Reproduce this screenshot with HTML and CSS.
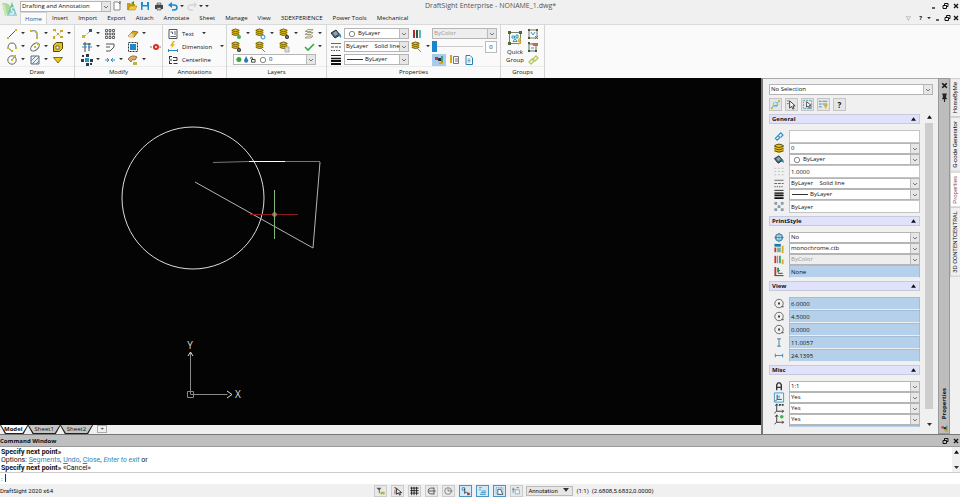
FILE: index.html
```html
<!DOCTYPE html>
<html lang="en">
<head>
    <meta charset="UTF-8">
    <meta name="viewport" content="width=device-width, initial-scale=1.0">
    <title>DraftSight Enterprise - NONAME_1.dwg*</title>
    <link rel="stylesheet" href="styles.css">
</head>
<body>
    <!-- icon sprite -->
    <svg class="sprite" aria-hidden="true">
        <symbol id="i-down" viewBox="0 0 5 4"><path d="M0 0h5L2.500 3z" fill="#333"/></symbol>
        <symbol id="i-up" viewBox="0 0 6 4"><path d="M0 4h6L3 0z" fill="#111"/></symbol>
        <symbol id="i-close" viewBox="0 0 8 8"><path d="M2 2l4 4M6 2l-4 4" stroke="#111" stroke-width="1.300"/></symbol>
        <symbol id="i-min" viewBox="0 0 8 8"><path d="M2 6h3" stroke="#111" stroke-width="1.300"/></symbol>
        <symbol id="i-restore" viewBox="0 0 8 8"><path d="M3.500 3V1.500h3.500v3H5.500M2 3.500h3.500v3H2z" fill="none" stroke="#111"/></symbol>
        <symbol id="i-pin" viewBox="0 0 8 8"><path d="M2 1h4M2 5h4M4 5v3" stroke="#222"/><path d="M2.500 1h3v4h-3z" fill="#222"/></symbol>

        <symbol id="i-new" viewBox="0 0 12 12"><path d="M3 2h4l2 2v6H3z" fill="#fff" stroke="#888"/><path d="M9 1v3" stroke="#444"/></symbol>
        <symbol id="i-open" viewBox="0 0 12 12"><path d="M2 3h3l1 1h4v6H2z" fill="#c99a1b"/><path d="M3 10l2-4h7l-2 4z" fill="#f2cf3a" stroke="#8b741a" stroke-width=".5"/><path d="M6 3l3-2v4z" fill="#27a33d"/></symbol>
        <symbol id="i-save" viewBox="0 0 12 12"><path d="M2 2h8v8H2z" fill="#2589c9"/><path d="M4 2h4v3H4zM3.500 6.500h5V10h-5z" fill="#e7f5fc"/></symbol>
        <symbol id="i-print" viewBox="0 0 12 12"><path d="M2 5h8v4H2z" fill="#444"/><path d="M4 3h4v2H4zM4 7.500h4V10H4z" fill="#ccc" stroke="#444" stroke-width=".6"/></symbol>
        <symbol id="i-undo" viewBox="0 0 12 12"><path d="M3 5h4q3 0 3 2.500T7 10H5" fill="none" stroke="#168bd0" stroke-width="1.500"/><path d="M1 5l4-3v6z" fill="#168bd0"/></symbol>
        <symbol id="i-redo" viewBox="0 0 12 12"><path d="M9 5H5Q2 5 2 7.500T5 10h2" fill="none" stroke="#d4d4d4" stroke-width="1.300"/><path d="M11 5L8 2v6z" fill="#d4d4d4"/></symbol>

        <symbol id="i-line" viewBox="0 0 12 12"><path d="M2 10L10 2" stroke="#555"/><path d="M1 9h2v2H1zM9 1h2v2H9z" fill="#c9b928"/></symbol>
        <symbol id="i-poly" viewBox="0 0 12 12"><path d="M2 3q6-1 6 2v5" fill="none" stroke="#666"/><path d="M1 2h2v2H1zM6 3h2v2H6zM7 9h2v2H7z" fill="#c9b928"/></symbol>
        <symbol id="i-points" viewBox="0 0 12 12"><path d="M2 2l4 4 4-3M6 6l-4 4M6 6l4 4" stroke="#888" stroke-width=".7" stroke-dasharray="1 1" fill="none"/><path d="M1 1h3v2H1zM8 2h3v2H8zM5 5h2v2H5zM1 8h2v3H1zM8 8h3v2H8z" fill="#c9a928"/></symbol>
        <symbol id="i-arc" viewBox="0 0 12 12"><path d="M2 7q0-5 4-5t4 5M2 7l4 3" fill="none" stroke="#666"/><path d="M1 6h2v2H1zM9 6h2v2H9zM5 9h2v2H5z" fill="#c9b928"/></symbol>
        <symbol id="i-ellipse" viewBox="0 0 12 12"><ellipse cx="6" cy="6" rx="5" ry="3" transform="rotate(-40 6 6)" fill="none" stroke="#666"/><path d="M5 5h2v2H5zM8 2h2v2H8z" fill="#c9b928"/></symbol>
        <symbol id="i-box" viewBox="0 0 12 12"><path d="M1.500 4l3-2.500h6v6l-3 3h-6z" fill="#e3bf20" stroke="#554700"/><path d="M4 5h3v3H4z" fill="#fff" stroke="#554700" stroke-width=".7"/></symbol>
        <symbol id="i-circle" viewBox="0 0 12 12"><circle cx="6" cy="6" r="4.200" fill="none" stroke="#666"/><path d="M6 6l3-4" stroke="#777"/><path d="M5 5h2v2H5zM8 1h2v2H8z" fill="#c9b928"/></symbol>
        <symbol id="i-hatch" viewBox="0 0 12 12"><path d="M2 2h8v8H2z" fill="#e6f3fa" stroke="#667"/><path d="M2 7l5-5M3 10l7-7M7 10l3-3" stroke="#3b96c9"/></symbol>
        <symbol id="i-tri" viewBox="0 0 12 12"><path d="M1.500 3.500h9L6 9z" fill="#efca19" stroke="#665300" stroke-width=".8"/></symbol>

        <symbol id="i-move" viewBox="0 0 12 12"><path d="M3 9l6-6" stroke="#777" stroke-dasharray="1 1"/><path d="M8 1h3v3H8z" fill="#1d5f87"/><path d="M1 7h3v3H1z" fill="#c9b928"/></symbol>
        <symbol id="i-array" viewBox="0 0 12 12"><path d="M1.500 1.500h2v2h-2zM5 1.500h2v2H5zM8.500 1.500h2v2h-2zM1.500 5h2v2h-2zM5 5h2v2H5zM8.500 5h2v2h-2zM1.500 8.500h2v2h-2zM5 8.500h2v2H5zM8.500 8.500h2v2h-2z" fill="none" stroke="#444" stroke-width=".8"/></symbol>
        <symbol id="i-erase" viewBox="0 0 12 12"><path d="M1 8l5-5 5 1-4 5H3z" fill="#d8a81c" stroke="#665022" stroke-width=".7"/><path d="M1 8l3-3 3 2-1 3H3z" fill="#e9d58b"/></symbol>
        <symbol id="i-trim" viewBox="0 0 12 12"><path d="M4 1v10M8 2v8M2 3h8" stroke="#354650"/><path d="M1 6h5M7 6h4" stroke="#1f8ecb"/></symbol>
        <symbol id="i-fillet" viewBox="0 0 12 12"><path d="M2 3h8v3L6 10H2M2 6h4" fill="none" stroke="#555"/></symbol>
        <symbol id="i-scale" viewBox="0 0 12 12"><path d="M1.500 1.500h9v9h-9z" fill="none" stroke="#333" stroke-dasharray="2 1"/><path d="M3 3h6v6H3z" fill="#198bcd"/></symbol>
        <symbol id="i-explode" viewBox="0 0 12 12"><path d="M0 6h12" stroke="#777" stroke-dasharray="2 1"/><circle cx="6" cy="6" r="3" fill="#da2d20"/><circle cx="6" cy="6" r="1" fill="#fff"/></symbol>
        <symbol id="i-pattern" viewBox="0 0 12 12"><path d="M5 0h3v3H5zM5 9h3v3H5zM0 5h3v3H0zM9 5h3v3H9zM1 1h2v2H1zM9 9h2v2H9z" fill="#263c49"/><path d="M4 4h4v4H4z" fill="#2d91c5"/></symbol>
        <symbol id="i-stretch" viewBox="0 0 12 12"><path d="M1 6h4M7 6h4M3 4l2 2-2 2M9 4L7 6l2 2" fill="none" stroke="#2c8fc3"/></symbol>
        <symbol id="i-arrange" viewBox="0 0 12 12"><path d="M1 5q4-5 9-2L8 6q-3-2-4 2z" fill="#d5ac70" stroke="#7f5527" stroke-width=".8"/><path d="M6 8h4v3H6z" fill="#bcb24a"/></symbol>

        <symbol id="i-text" viewBox="0 0 12 12"><path d="M2 1.500h8v9H2z" fill="#fff" stroke="#555"/><path d="M3.500 4h2v2M7 4h2M7 6h2M3.500 8.500H9" stroke="#345" stroke-width=".8" fill="none"/></symbol>
        <symbol id="i-dim" viewBox="0 0 12 12"><path d="M1.500 8v3M10.500 8v3M2 9.500h8" stroke="#258cc8"/><path d="M6 0L3 5h2L4 8l4-5H6l2-3z" fill="#e4b91c"/></symbol>
        <symbol id="i-center" viewBox="0 0 12 12"><path d="M2 2.500h3M2.500 2v3M6 3.500h4v3H6M2.500 10V7M2 9.500h3M6.500 9.500h4M2 6h3" fill="none" stroke="#333"/></symbol>

        <symbol id="i-layer" viewBox="0 0 12 12"><path d="M1 3q5-4 10 0v6q-5 3-10 0z" fill="#e9c41d"/><path d="M1 3.500q5 3 10 0M1 6q5 3 10 0M1 8.500q5 3 10 0M1 3q5-3.500 10 0" fill="none" stroke="#4b3f05"/></symbol>
        <symbol id="i-layer-green" viewBox="0 0 12 12"><use href="#i-layer" width="9" height="9"/><circle cx="8" cy="9" r="2" fill="#35b64a"/></symbol>
        <symbol id="i-layer-blue" viewBox="0 0 12 12"><use href="#i-layer" width="9" height="9"/><circle cx="8" cy="9" r="2" fill="#fff" stroke="#1f8ecb"/></symbol>
        <symbol id="i-layer-lock" viewBox="0 0 12 12"><use href="#i-layer" width="9" height="9"/><circle cx="8" cy="9" r="2" fill="#222"/><circle cx="8" cy="9" r=".7" fill="#fff"/></symbol>
        <symbol id="i-layer-find" viewBox="0 0 12 12"><use href="#i-layer" width="9" height="9"/><path d="M6 7l4 4" stroke="#888"/></symbol>
        <symbol id="i-layer-del" viewBox="0 0 12 12"><use href="#i-layer" width="9" height="9"/><path d="M6 6h4v5H6z" fill="#ddd" stroke="#999" stroke-width=".7"/></symbol>
        <symbol id="i-layers" viewBox="0 0 12 12"><path d="M2 3.500l3-2h5l-2 2zM2 6.500l3-2h5l-2 2zM2 10l3-2h5l-2 2z" fill="#f3efcf" stroke="#8c8c70" stroke-width=".8"/></symbol>
        <symbol id="i-check" viewBox="0 0 12 12"><path d="M2 6l3 3 6-6" fill="none" stroke="#34ad43" stroke-width="1.600"/></symbol>
        <symbol id="i-states" viewBox="0 0 26 10"><circle cx="4" cy="5" r="2.800" fill="#3aa63c"/><path d="M12 1l2.300 5q0 2.500-2.300 2.500T9.700 6z" fill="#2179ba"/><path d="M17 4V3q1-1 2 0v2M18 5h4v3h-4z" fill="none" stroke="#333"/></symbol>

        <symbol id="i-paint" viewBox="0 0 12 12"><path d="M1 5l5-3 4 5-5 3z" fill="#466273" stroke="#22333d"/><path d="M3 5l3-2 2 3-3 2z" fill="#8fa5b0"/><path d="M9 5q3 2 2 5l-2-2z" fill="#2b8fb5"/></symbol>
        <symbol id="i-ltype" viewBox="0 0 12 12"><path d="M1 2.500h10" stroke="#666"/><path d="M1 6h10" stroke="#555" stroke-dasharray="3 1"/><path d="M1 9.500h10" stroke="#555" stroke-dasharray="1.500 1"/></symbol>
        <symbol id="i-lscale" viewBox="0 0 12 12"><path d="M1 2.500h10M1 6h10M1 9.500h10" stroke="#bbb" stroke-dasharray="2 2"/></symbol>
        <symbol id="i-lweight" viewBox="0 0 12 12"><path d="M1 1.500h10" stroke="#222"/><path d="M1 4.500h10" stroke="#111" stroke-width="1.500"/><path d="M1 7h10M1 10h10" stroke="#111" stroke-width="2"/></symbol>
        <symbol id="i-bars" viewBox="0 0 12 12"><path d="M2 2h2v8H2z" fill="#b7282d"/><path d="M5 2h2v8H5z" fill="#1f5f43"/><path d="M8 2h2v8H8z" fill="#55b8b0"/></symbol>
        <symbol id="i-ring" viewBox="0 0 8 8"><circle cx="4" cy="4" r="2.700" fill="#fff" stroke="#555" stroke-width=".7"/></symbol>
        <symbol id="i-match" viewBox="0 0 12 12"><path d="M2 3h3v3H2z" fill="#c8342f"/><path d="M5 4h3v3H5z" fill="#234"/><path d="M9 2v8" stroke="#2f8f5d" stroke-width="1.500"/><path d="M6 8h4v2H6z" fill="#d8a81c"/></symbol>
        <symbol id="i-list" viewBox="0 0 12 12"><path d="M3 1v8" stroke="#d9a61b" stroke-width="2"/><path d="M5.500 2.500h5v7h-5zM7 5h3M7 7h3" fill="none" stroke="#555" stroke-width=".8"/></symbol>
        <symbol id="i-sheet" viewBox="0 0 12 12"><path d="M3 1.500h4l2.500 2.500v6.500H3z" fill="#fff" stroke="#2b7fae"/><path d="M4.500 5h3M4.500 6.500h3M4.500 8h3" stroke="#2b7fae" stroke-width=".7"/></symbol>
        <symbol id="i-group" viewBox="0 0 16 16"><path d="M2.500 2.500h11v11h-11z" fill="none" stroke="#77826e"/><path d="M1 1h3v3H1zM12 1h3v3h-3zM1 12h3v3H1z" fill="#4e6a32"/><path d="M5 6h2.500v2H5zM9 5h2v3H9zM6 11.500l2-3 2 3z" fill="none" stroke="#3697bd"/><path d="M12 8l-2 4h2l-1 4 4-5h-2l1-3z" fill="#e8be1b"/></symbol>
        <symbol id="i-ungroup" viewBox="0 0 12 12"><path d="M2 2h8v8H2z" fill="none" stroke="#777"/><path d="M1 1h2v2H1zM9 1h2v2H9zM1 9h2v2H1z" fill="#46602c"/><path d="M4 4l2 3 2-3" fill="none" stroke="#3697bd"/><path d="M8 8l3 3M11 8l-3 3" stroke="#d54258"/></symbol>
        <symbol id="i-editgroup" viewBox="0 0 12 12"><path d="M2 3h7v7H2z" fill="none" stroke="#666"/><path d="M1 1h2v2H1zM1 9h2v2H1zM8 9h2v2H8z" fill="#46602c"/><path d="M5 2h6v3H6z" fill="#b9783b"/><path d="M4 7h3" stroke="#3697bd"/></symbol>
        <symbol id="i-link" viewBox="0 0 12 12"><path d="M2 8l3-3 2 2-3 3zM6 5l3-3 2 2-3 3z" fill="none" stroke="#b5c957" stroke-width="1.300"/></symbol>

        <symbol id="i-chain" viewBox="0 0 12 12"><path d="M2 8l3-3 2 2-3 3zM5.500 4.500L8 2l2.300 2.300L8 7" fill="none" stroke="#2a8fc9" stroke-width="1.300"/></symbol>
        <symbol id="i-checker" viewBox="0 0 12 12"><path d="M1 1h3v3H1zM8 1h3v3H8zM4.500 4.500h3v3h-3zM1 8h3v3H1zM8 8h3v3H8z" fill="#8a9aa5"/></symbol>
        <symbol id="i-globe" viewBox="0 0 12 12"><circle cx="6" cy="6" r="4" fill="#d8eef7" stroke="#2678a4"/><path d="M1 6h10M6 1v10M4 3q-1.500 3 0 6M8 3q1.500 3 0 6" fill="none" stroke="#2678a4" stroke-width=".8"/></symbol>
        <symbol id="i-pstyle" viewBox="0 0 12 12"><path d="M1 1h7v3H1z" fill="#2379a4"/><path d="M1 5h2v5H1z" fill="#c73232"/><path d="M4 5h4v5H4z" fill="#6eb3a2"/><path d="M9 3h2v8H9z" fill="#dda929"/></symbol>
        <symbol id="i-pcolor" viewBox="0 0 12 12"><path d="M1 2h2v8H1z" fill="#c73232"/><path d="M4 2h1v8H4zM6 2h2v8H6z" fill="#45a569"/><path d="M9 6h2v5H9z" fill="#dda929"/></symbol>
        <symbol id="i-ptable" viewBox="0 0 12 12"><path d="M1 1h2v9H1z" fill="#c73232"/><path d="M1 10.500h10M5 8h5M5 5h2" stroke="#333"/><path d="M4 2h2v5H4z" fill="#2c9059"/></symbol>
        <symbol id="i-target" viewBox="0 0 12 12"><circle cx="6" cy="6" r="4.600" fill="none" stroke="#555" stroke-width=".9"/><path d="M5 5h2v2H5z" fill="#333"/><path d="M9 9.500h2" stroke="#333"/></symbol>
        <symbol id="i-height" viewBox="0 0 12 12"><path d="M4 2h4M4 10h4M6 2v8" stroke="#3d7794"/></symbol>
        <symbol id="i-width" viewBox="0 0 12 12"><path d="M2 4v4M10 4v4M2 6h8" stroke="#2b8fc5"/></symbol>
        <symbol id="i-a" viewBox="0 0 12 12"><path d="M3.500 10V4l1.500-2h2l1.500 2v6M4 7h4" fill="none" stroke="#333" stroke-width="1.500"/></symbol>
        <symbol id="i-ucs" viewBox="0 0 12 12"><path d="M3.500 1v8H11M1 11l2.500-2M2 3l1.500-2L5 3M9.500 7.500L11 9l-1.500 1.500" fill="none" stroke="#333"/></symbol>
        <symbol id="i-ucs-box" viewBox="0 0 12 12"><path d="M1 1h10v10H1z" fill="#eaf6fc" stroke="#3799c8"/><path d="M4 3v5h5M2 10l2-2M6 4v2" fill="none" stroke="#333"/></symbol>
        <symbol id="i-ucs-num" viewBox="0 0 12 12"><use href="#i-ucs" width="12" height="12"/><path d="M6 1h2v2H6zM9 1h2v2H9z" fill="#333"/></symbol>
        <symbol id="i-ucs-dot" viewBox="0 0 12 12"><use href="#i-ucs" width="12" height="12"/><circle cx="9" cy="3" r="2" fill="#3fb748"/></symbol>

        <symbol id="i-wand" viewBox="0 0 12 12"><path d="M2 10l2-3h4V4l3-2" fill="none" stroke="#72a66b"/><circle cx="6" cy="6" r="2.500" fill="none" stroke="#7fbad2"/><path d="M9 1h2v2H9zM1 9h2v2H1z" fill="#c9b928"/></symbol>
        <symbol id="i-cursor" viewBox="0 0 12 12"><path d="M4 2v8l2-2 1.500 3 1.300-.6L7.500 7.500H10z" fill="#fff" stroke="#222" stroke-width=".9"/><path d="M1 2h2M1 5h2" stroke="#777"/></symbol>
        <symbol id="i-selbox" viewBox="0 0 12 12"><path d="M1.500 1.500h9v9h-9z" fill="none" stroke="#48a0c7" stroke-dasharray="2 1"/><path d="M5 3v6l1.500-1.500L8 10l1-.5L8 7h2z" fill="#fff" stroke="#222" stroke-width=".8"/></symbol>
        <symbol id="i-filter" viewBox="0 0 12 12"><path d="M1 2.500h3M5 2.500h5M1 5.500h3M5 5.500h5M1 8.500h3" stroke="#3791ba"/><path d="M6 6h5L9 9v2L8 10z" fill="#e0b01e"/></symbol>
        <symbol id="i-funnel" viewBox="0 0 12 12"><path d="M1 2h6L5 5v4L4 8V5z" fill="#555"/><path d="M6 7h5v3H6z" fill="#b5b640"/></symbol>
        <symbol id="i-snap" viewBox="0 0 12 12"><path d="M2 2h2v2M4 4h2M3 5v5" stroke="#9a3434" fill="none"/><path d="M5 3v7l2-2 1.500 3 1-.5L8.500 8H11z" fill="#fff" stroke="#111"/></symbol>
        <symbol id="i-grid" viewBox="0 0 12 12"><path d="M1 2.500h10M1 5.500h10M1 8.500h10M2.500 1v10M5.500 1v10M8.500 1v10" stroke="#111"/></symbol>
        <symbol id="i-ortho" viewBox="0 0 12 12"><path d="M3 6h8M9 2v8M9 2.500H5Q2 3 2 6t3 3.500h4" fill="none" stroke="#444"/></symbol>
        <symbol id="i-polar" viewBox="0 0 12 12"><circle cx="5.500" cy="6" r="4" fill="none" stroke="#777"/><path d="M5.500 6H11M5.500 3v3" stroke="#777"/></symbol>
        <symbol id="i-esnap" viewBox="0 0 12 12"><path d="M2 2h3v3H2z" fill="none" stroke="#268ac4"/><path d="M5 3v6l2-2 3 3" fill="none" stroke="#333"/><path d="M8 8h3v3H8z" fill="#a33"/></symbol>
        <symbol id="i-etrack" viewBox="0 0 12 12"><path d="M2 2h3M2 4.500h2M5 6h5M4 8h6M3 10h7" stroke="#2d88b7"/></symbol>
        <symbol id="i-quick" viewBox="0 0 12 12"><path d="M2 2h8v8H2z" fill="none" stroke="#3c8fb9" stroke-dasharray="1 1"/><path d="M4 4h4v2l2 4H4z" fill="#fff" stroke="#444"/></symbol>
        <symbol id="i-lw" viewBox="0 0 12 12"><path d="M4.500 4.500h5v5h-5z" fill="#eef7fb" stroke="#8aa"/><path d="M1 4h3M2 2v6M6 2h3" stroke="#2d88b7"/></symbol>
    </svg>

    <div class="app">
        <header class="top">
            <svg class="logo" viewBox="0 0 20 20" role="img" aria-label="DraftSight">
                <path d="M2 3q9-1 8 6-1 5-5 7z" fill="#a9d9a0"/>
                <path d="M12 2l5 14H7z" fill="#6cc3a3"/>
                <path d="M2 3l3 13 2-1L5 5z" fill="#cfe6b0"/>
                <path d="M12 9l5 7H7z" fill="#9fd3e6"/>
                <path d="M14 8q-3-1-3 1t2 2 0 3h-3" fill="none" stroke="#fff"/>
            </svg>
            <div class="bars">
                <div class="titlebar">
                    <select class="combo workspace" aria-label="Workspace"><option>Drafting and Annotation</option></select>
                    <div class="quick">
                        <button class="tool" aria-label="New"><svg><use href="#i-new"/></svg></button>
                        <button class="tool" aria-label="Open"><svg><use href="#i-open"/></svg></button>
                        <button class="tool" aria-label="Save"><svg><use href="#i-save"/></svg></button>
                        <button class="tool" aria-label="Print"><svg><use href="#i-print"/></svg></button>
                        <button class="tool" aria-label="Undo"><svg><use href="#i-undo"/></svg><svg class="arr"><use href="#i-down"/></svg></button>
                        <button class="tool" aria-label="Redo"><svg><use href="#i-redo"/></svg><svg class="arr"><use href="#i-down"/></svg></button>
                        <button class="tool" aria-label="Customize"><svg class="arr"><use href="#i-down"/></svg></button>
                    </div>
                    <h1 class="title">DraftSight Enterprise - NONAME_1.dwg*</h1>
                    <div class="winbtns">
                        <button aria-label="Minimize"><svg><use href="#i-min"/></svg></button>
                        <button aria-label="Restore"><svg><use href="#i-restore"/></svg></button>
                        <button aria-label="Close"><svg><use href="#i-close"/></svg></button>
                    </div>
                </div>
                <nav class="tabs">
                    <a href="#" class="active">Home</a>
                    <a href="#">Insert</a>
                    <a href="#">Import</a>
                    <a href="#">Export</a>
                    <a href="#">Attach</a>
                    <a href="#">Annotate</a>
                    <a href="#">Sheet</a>
                    <a href="#">Manage</a>
                    <a href="#">View</a>
                    <a href="#">3DEXPERIENCE</a>
                    <a href="#">Power Tools</a>
                    <a href="#">Mechanical</a>
                    <div class="docbtns">
                        <button class="hint" aria-label="Collapse ribbon">▽</button>
                        <button class="help" aria-label="Help">?</button>
                        <button class="more" aria-label="Help menu"><svg class="arr"><use href="#i-down"/></svg></button>
                        <button aria-label="Minimize drawing"><svg><use href="#i-min"/></svg></button>
                        <button aria-label="Restore drawing"><svg><use href="#i-restore"/></svg></button>
                        <button aria-label="Close drawing"><svg><use href="#i-close"/></svg></button>
                    </div>
                </nav>
            </div>
        </header>

        <div class="ribbon">
            <section class="group draw">
                <div class="tools">
                    <button class="tool" aria-label="Line"><svg><use href="#i-line"/></svg><svg class="arr"><use href="#i-down"/></svg></button>
                    <button class="tool" aria-label="Polyline"><svg><use href="#i-poly"/></svg><svg class="arr"><use href="#i-down"/></svg></button>
                    <button class="tool" aria-label="Point"><svg><use href="#i-points"/></svg><svg class="arr"><use href="#i-down"/></svg></button>
                    <button class="tool" aria-label="Arc"><svg><use href="#i-arc"/></svg><svg class="arr"><use href="#i-down"/></svg></button>
                    <button class="tool" aria-label="Ellipse"><svg><use href="#i-ellipse"/></svg><svg class="arr"><use href="#i-down"/></svg></button>
                    <button class="tool" aria-label="Region"><svg><use href="#i-box"/></svg></button>
                    <button class="tool" aria-label="Circle"><svg><use href="#i-circle"/></svg><svg class="arr"><use href="#i-down"/></svg></button>
                    <button class="tool" aria-label="Hatch"><svg><use href="#i-hatch"/></svg><svg class="arr"><use href="#i-down"/></svg></button>
                    <button class="tool" aria-label="Mask"><svg><use href="#i-tri"/></svg></button>
                </div>
                <h2>Draw</h2>
            </section>
            <section class="group modify">
                <div class="tools">
                    <button class="tool" aria-label="Move"><svg><use href="#i-move"/></svg><svg class="arr"><use href="#i-down"/></svg></button>
                    <button class="tool" aria-label="Copy"><svg><use href="#i-array"/></svg></button>
                    <button class="tool" aria-label="Delete"><svg><use href="#i-erase"/></svg><svg class="arr"><use href="#i-down"/></svg></button>
                    <span></span>
                    <button class="tool" aria-label="Trim"><svg><use href="#i-trim"/></svg><svg class="arr"><use href="#i-down"/></svg></button>
                    <button class="tool" aria-label="Fillet"><svg><use href="#i-fillet"/></svg></button>
                    <button class="tool" aria-label="Scale"><svg><use href="#i-scale"/></svg></button>
                    <button class="tool" aria-label="Explode"><svg><use href="#i-explode"/></svg></button>
                    <button class="tool" aria-label="Pattern"><svg><use href="#i-pattern"/></svg><svg class="arr"><use href="#i-down"/></svg></button>
                    <button class="tool" aria-label="Stretch"><svg><use href="#i-stretch"/></svg><svg class="arr"><use href="#i-down"/></svg></button>
                    <button class="tool" aria-label="Order"><svg><use href="#i-arrange"/></svg><svg class="arr"><use href="#i-down"/></svg></button>
                </div>
                <h2>Modify</h2>
            </section>
            <section class="group annot">
                <div class="tools">
                    <button class="tool"><svg><use href="#i-text"/></svg>Text<svg class="arr"><use href="#i-down"/></svg></button>
                    <button class="tool"><svg><use href="#i-dim"/></svg>Dimension<svg class="arr"><use href="#i-down"/></svg></button>
                    <button class="tool"><svg><use href="#i-center"/></svg>Centerline</button>
                </div>
                <h2>Annotations</h2>
            </section>
            <section class="group layers">
                <div class="tools">
                    <button class="tool" aria-label="Layer on"><svg><use href="#i-layer-green"/></svg><svg class="arr"><use href="#i-down"/></svg></button>
                    <button class="tool" aria-label="Freeze layer"><svg><use href="#i-layer-blue"/></svg><svg class="arr"><use href="#i-down"/></svg></button>
                    <button class="tool" aria-label="Lock layer"><svg><use href="#i-layer-lock"/></svg><svg class="arr"><use href="#i-down"/></svg></button>
                    <button class="tool" aria-label="Layer states"><svg><use href="#i-layers"/></svg><svg class="arr"><use href="#i-down"/></svg></button>
                    <button class="tool" aria-label="Layers manager"><svg><use href="#i-layer-lock"/></svg></button>
                    <button class="tool" aria-label="Layer preview"><svg><use href="#i-layer-find"/></svg></button>
                    <button class="tool" aria-label="Delete layer"><svg><use href="#i-layer-del"/></svg></button>
                    <button class="tool" aria-label="Activate layer"><svg><use href="#i-check"/></svg><svg class="arr"><use href="#i-down"/></svg></button>
                    <div class="combo swatched layerlist">
                        <svg class="states"><use href="#i-states"/></svg><svg class="ring"><use href="#i-ring"/></svg>
                        <select aria-label="Active layer"><option>0</option></select>
                    </div>
                </div>
                <h2>Layers</h2>
            </section>
            <section class="group props">
                <div class="tools">
                    <svg class="ico"><use href="#i-paint"/></svg>
                    <div class="combo swatched"><svg class="ring"><use href="#i-ring"/></svg><select aria-label="Line color"><option>ByLayer</option></select></div>
                    <button class="tool" aria-label="Colors"><svg><use href="#i-bars"/></svg></button>
                    <select class="combo" aria-label="Print color" disabled><option>ByColor</option></select>

                    <svg class="ico"><use href="#i-ltype"/></svg>
                    <select class="combo" aria-label="Line style"><option>ByLayer &nbsp; &nbsp;Solid line</option></select>
                    <button class="tool" aria-label="Layer properties"><svg><use href="#i-layer-find"/></svg><svg class="arr"><use href="#i-down"/></svg></button>
                    <div class="transparency">
                        <input type="range" min="0" max="90" value="0" aria-label="Transparency">
                        <input type="text" value="0" aria-label="Transparency value">
                    </div>

                    <svg class="ico"><use href="#i-lweight"/></svg>
                    <div class="combo swatched"><span class="weight"></span><select aria-label="Line weight"><option>ByLayer</option></select></div>
                    <span></span>
                    <div class="row">
                        <button class="tool on" aria-label="Match properties"><svg><use href="#i-match"/></svg></button>
                        <button class="tool" aria-label="Property list"><svg><use href="#i-list"/></svg></button>
                        <button class="tool" aria-label="Sheet properties"><svg><use href="#i-sheet"/></svg></button>
                    </div>
                </div>
                <h2>Properties</h2>
            </section>
            <section class="group groups">
                <div class="tools">
                    <button class="tool big"><svg><use href="#i-group"/></svg>Quick<br>Group</button>
                    <button class="tool" aria-label="Ungroup"><svg><use href="#i-ungroup"/></svg></button>
                    <button class="tool" aria-label="Edit group"><svg><use href="#i-editgroup"/></svg></button>
                    <button class="tool" aria-label="Group selection"><svg><use href="#i-link"/></svg></button>
                </div>
                <h2>Groups</h2>
            </section>
        </div>

        <main class="work">
            <div class="drawing">
                <svg class="canvas" role="img" aria-label="Model space">
                    <g fill="none" stroke="#dcdcdc" stroke-width="1">
                        <circle cx="193" cy="120" r="71"/>
                        <path d="M195 104l118 66 7-86" stroke="#b4b4b4"/>
                        <path d="M213 84.500L249 83.500h71" stroke="#777"/>
                        <path d="M249 83.500h36" stroke="#fff"/>
                    </g>
                    <path d="M250 136.500h48" stroke="#8f1c20"/>
                    <path d="M274.500 112v49" stroke="#86b57c"/>
                    <path d="M273 135h3v3h-3z" fill="none" stroke="#b99a7c"/>
                    <g fill="none" stroke="#8a8a8a">
                        <path d="M190.500 316v-42M190.500 316.500h37M187.500 313.500h6v6h-6z"/>
                        <path d="M188 278l2.500-4 2.500 4M227 313l5 3.500-5 3.500" stroke="#ddd"/>
                    </g>
                    <text x="190" y="271" class="axis">Y</text>
                    <text x="238" y="320" class="axis">X</text>
                </svg>
                <div class="sheets">
                    <a href="#" class="active">Model</a>
                    <a href="#">Sheet1</a>
                    <a href="#">Sheet2</a>
                    <button aria-label="New sheet">+</button>
                </div>
            </div>

            <aside class="panel">
                <select class="combo" aria-label="Selection"><option>No Selection</option></select>
                <div class="panelbtns">
                    <button aria-label="Quick select"><svg><use href="#i-wand"/></svg></button>
                    <button aria-label="Select"><svg><use href="#i-cursor"/></svg></button>
                    <button aria-label="Select matching"><svg><use href="#i-selbox"/></svg></button>
                    <button aria-label="Smart select"><svg><use href="#i-filter"/></svg></button>
                    <button aria-label="Panel help">?</button>
                </div>
                <div class="scroller">
                    <div class="fields">
                        <button class="head">General<svg><use href="#i-up"/></svg></button>
                        <div class="rows">
                            <svg><use href="#i-chain"/></svg><input type="text" aria-label="Hyperlink">
                            <svg><use href="#i-layer"/></svg><select class="combo" aria-label="Layer"><option>0</option></select>
                            <svg><use href="#i-paint"/></svg><div class="combo swatched"><svg class="ring"><use href="#i-ring"/></svg><select aria-label="Color"><option>ByLayer</option></select></div>
                            <svg><use href="#i-lscale"/></svg><input type="text" value="1.0000" aria-label="Line scale">
                            <svg><use href="#i-ltype"/></svg><select class="combo" aria-label="Line style"><option>ByLayer &nbsp; &nbsp;Solid line</option></select>
                            <svg><use href="#i-lweight"/></svg><div class="combo swatched"><span class="weight"></span><select aria-label="Line weight"><option>ByLayer</option></select></div>
                            <svg><use href="#i-checker"/></svg><input type="text" value="ByLayer" aria-label="Transparency">
                        </div>
                        <button class="head">PrintStyle<svg><use href="#i-up"/></svg></button>
                        <div class="rows">
                            <svg><use href="#i-globe"/></svg><select class="combo" aria-label="Annotative"><option>No</option></select>
                            <svg><use href="#i-pstyle"/></svg><select class="combo" aria-label="Print style table"><option>monochrome.ctb</option></select>
                            <svg><use href="#i-pcolor"/></svg><select class="combo" aria-label="Print style" disabled><option>ByColor</option></select>
                            <svg><use href="#i-ptable"/></svg><input type="text" value="None" class="ro" readonly aria-label="Attached to">
                        </div>
                        <button class="head">View<svg><use href="#i-up"/></svg></button>
                        <div class="rows">
                            <svg><use href="#i-target"/></svg><input type="text" value="6.0000" class="ro" readonly aria-label="Center X">
                            <svg><use href="#i-target"/></svg><input type="text" value="4.5000" class="ro" readonly aria-label="Center Y">
                            <svg><use href="#i-target"/></svg><input type="text" value="0.0000" class="ro" readonly aria-label="Center Z">
                            <svg><use href="#i-height"/></svg><input type="text" value="11.0057" class="ro" readonly aria-label="Height">
                            <svg><use href="#i-width"/></svg><input type="text" value="24.1395" class="ro" readonly aria-label="Width">
                        </div>
                        <button class="head">Misc<svg><use href="#i-up"/></svg></button>
                        <div class="rows">
                            <svg><use href="#i-a"/></svg><select class="combo" aria-label="Annotation scale"><option>1:1</option></select>
                            <svg><use href="#i-ucs-box"/></svg><select class="combo" aria-label="UCS icon on"><option>Yes</option></select>
                            <svg><use href="#i-ucs-num"/></svg><select class="combo" aria-label="UCS icon at origin"><option>Yes</option></select>
                            <svg><use href="#i-ucs-dot"/></svg><select class="combo" aria-label="UCS per view"><option>Yes</option></select>
                            <span></span><input type="text" class="ro" readonly aria-label="UCS name">
                        </div>
                    </div>
                    <div class="scrollbar">
                        <svg><use href="#i-up"/></svg>
                        <div class="thumb"></div>
                        <svg><use href="#i-down"/></svg>
                    </div>
                </div>
            </aside>

            <div class="grip">
                <button aria-label="Close panel"><svg><use href="#i-close"/></svg></button>
                <button aria-label="Pin panel"><svg><use href="#i-pin"/></svg></button>
                <span>Properties</span>
                <svg><use href="#i-match"/></svg>
            </div>
            <nav class="sidetabs">
                <a href="#">HomeByMe</a>
                <a href="#">G-code Generator</a>
                <a href="#" class="active">Properties</a>
                <a href="#">3D CONTENTCENTRAL</a>
            </nav>
        </main>

        <section class="command">
            <div class="cmdhead">
                <h2>Command Window</h2>
                <button aria-label="Float"><svg><use href="#i-restore"/></svg></button>
                <button aria-label="Close command window"><svg><use href="#i-close"/></svg></button>
            </div>
            <div class="history">
                <div class="log">
                    <p><b>Specify next point»</b></p>
                    <p>Options: <a href="#"><u>S</u>egments</a>, <a href="#"><u>U</u>ndo</a>, <a href="#"><u>C</u>lose</a>, <a href="#" class="enter">Enter to exit</a> or</p>
                    <p><b>Specify next point»</b> «Cancel»</p>
                </div>
                <div class="scrollbar">
                    <svg><use href="#i-up"/></svg>
                    <div class="thumb"></div>
                    <svg><use href="#i-down"/></svg>
                </div>
            </div>
            <label class="prompt">: <input type="text" aria-label="Command"></label>
        </section>

        <footer class="status">
            <span class="version">DraftSight 2020 x64</span>
            <div class="toggles">
                <button aria-label="Filter"><svg><use href="#i-funnel"/></svg></button>
                <button aria-label="Snap"><svg><use href="#i-snap"/></svg></button>
                <button aria-label="Grid"><svg><use href="#i-grid"/></svg></button>
                <button aria-label="Ortho"><svg><use href="#i-ortho"/></svg></button>
                <button aria-label="Polar"><svg><use href="#i-polar"/></svg></button>
                <button class="on" aria-label="ESnap"><svg><use href="#i-esnap"/></svg></button>
                <button class="on" aria-label="ETrack"><svg><use href="#i-etrack"/></svg></button>
                <button class="on" aria-label="Quick input"><svg><use href="#i-quick"/></svg></button>
                <button aria-label="Line weight"><svg><use href="#i-lw"/></svg></button>
            </div>
            <button class="scale">Annotation<svg><use href="#i-down"/></svg></button>
            <span>(1:1)</span>
            <span>(2.6808,5.6832,0.0000)</span>
        </footer>
    </div>
</body>
</html>
```

FILE: styles.css
```css
*{margin: 0; padding: 0; box-sizing: border-box}
body{font: 6px/10px "Open Sans", "Noto Sans", sans-serif; color: #111; background: #f0f0f0}
button, input, select{font: inherit; color: inherit; border: 0; border-radius: 0; background: none}
a{color: inherit; text-decoration: none}
h1, h2{font-size: inherit; font-weight: normal}
svg{display: block; flex: none}
.sprite{position: absolute; width: 0; height: 0}

.app{display: flex; flex-direction: column; height: 100vh; overflow: hidden}

/* shared controls */
.combo{appearance: none; height: 11px; min-width: 0; border: 1px solid #b5b5b5; padding-left: 1px; line-height: 9px; background: #fff url("data:image/svg+xml,%3Csvg xmlns='http://www.w3.org/2000/svg' width='9' height='9'%3E%3Cpath d='M0 0h9v9H0z' fill='%23e6e6e6'/%3E%3Cpath d='M.5 0v9' stroke='%23bbb'/%3E%3Cpath d='M3 4l2 2 2-2' fill='none' stroke='%23777'/%3E%3C/svg%3E") no-repeat right center}
.combo:disabled{background-color: #eee; color: #999; opacity: 1}
.swatched{display: flex; align-items: center}
.swatched select{appearance: none; flex: 1; min-width: 0; height: 9px; line-height: 9px; padding-left: 2px}
.ring{width: 8px; height: 8px; margin-left: 2px}
.weight{width: 16px; margin-left: 1px; border-top: 1px solid #333}
.tool{display: flex; align-items: center; gap: 3px; text-align: left; white-space: nowrap}
.tool svg, .ico{width: 12px; height: 12px}
.tool .arr, .arr{width: 4px; height: 3px}
.on{background: #a5cbee}

/* title and menu */
.top{display: flex; height: 24px; flex: none; background: #f0f0f0}
.logo{width: 20px; height: 20px}
.bars{flex: 1; min-width: 0; display: flex; flex-direction: column}
.titlebar{display: flex; align-items: center; height: 12px}
.workspace{width: 91px}
.quick{display: flex; gap: 2px}
.quick .tool{gap: 1px}
.title{flex: 1; text-align: center; font-size: 7px; color: #555; padding-right: 158px; white-space: nowrap}
.winbtns, .docbtns{display: flex; align-items: center; gap: 3px}
.winbtns svg, .docbtns svg{width: 8px; height: 8px}
.docbtns .arr{width: 4px; height: 3px}
.docbtns{margin-left: auto; gap: 1px}
.docbtns .hint{color: #777; margin-right: 7px}
.docbtns .help{font-weight: bold}
.docbtns .more{padding: 0 2px 0 4px}
.tabs{display: flex; height: 12px; line-height: 13px}
.tabs a{padding: 0 5px}
.tabs .active{background: #fafafa; border: 1px solid #d5d5d5; border-bottom: 0; line-height: 12px; padding: 0 4px; color: #35548b}

/* ribbon */
.ribbon{display: flex; height: 54px; flex: none; background: #fafafa; border-top: 1px solid #d9d9d9}
.group{display: flex; flex-direction: column; border-right: 1px solid #d5d5d5; padding-top: 2px}
.group h2{border-top: 1px solid #ececec; text-align: center; height: 12px; line-height: 11px}
.tools{display: grid; grid-auto-rows: 13px; flex: 1; align-items: center; padding-left: 6px}
.draw{width: 75px}
.draw .tools{grid-template-columns: repeat(3, 23px)}
.modify .tools{grid-template-columns: repeat(4, 23px); margin-right: -16px}
.modify{width: 88px}
.annot{width: 64px}
.annot .tools{padding-left: 4px}
.annot .arr{margin-left: 5px}
.layers .tools{grid-template-columns: repeat(4, 24px); padding-left: 4px; width: 99px}
.layerlist{grid-column: 1 / 5; width: 83px; margin-left: 2px}
.states{width: 24px; height: 9px}
.layerlist .ring{margin-left: 0}
.props .tools{grid-template-columns: 12px 65px 19px 65px; gap: 0 2px; padding: 0 3px}
.props .combo{width: 100%}
.transparency{display: flex; align-items: center; gap: 2px}
.transparency input[type=range]{appearance: none; flex: 1; min-width: 0; height: 11px; background: linear-gradient(#ccc, #ccc) no-repeat center / 100% 1px}
.transparency input[type=range]::-webkit-slider-thumb{appearance: none; width: 5px; height: 11px; background: #1b84cf}
.transparency input[type=text]{width: 12px; height: 12px; border: 1px solid #bbb; background: #fff; text-align: center}
.row{display: flex; gap: 1px}
.row .tool{padding: 0 1px}
.groups .tools{grid-auto-flow: column; grid-template-rows: repeat(3, 13px); grid-template-columns: 20px 14px; gap: 0 2px; padding: 0 3px 0 4px}
.big{grid-row: 1 / 4; display: block; text-align: center; line-height: 8px}
.big svg{width: 16px; height: 16px; margin: 0 auto 2px}

/* drawing area */
.work{display: flex; flex: 1; min-height: 0}
.drawing{display: flex; flex-direction: column; flex: 1; min-width: 0}
.canvas{flex: 1; width: 100%; min-height: 0; background: #040404}
.axis{fill: #ddd; font: 10px "Open Sans", sans-serif; text-anchor: middle}
.sheets{display: flex; height: 9px; line-height: 8px; background: #f0f0f0}
.sheets a{isolation: isolate; position: relative; padding: 0 7px; margin-right: -1px; background: #222; clip-path: polygon(0 0, 100% 0, calc(100% - 5px) 100%, 5px 100%)}
.sheets a::before{content: ""; position: absolute; z-index: -1; inset: 0 0 1px; background: #c4c4c4; clip-path: polygon(1px 0, calc(100% - 1px) 0, calc(100% - 6px) 100%, 6px 100%)}
.sheets .active{font-weight: bold; padding: 0 6px 0 4px}
.sheets .active::before{background: #fff}
.sheets button{width: 10px; line-height: 6px; margin-left: 5px; border: 1px solid #aaa; height: 8px}

/* properties panel */
.panel{width: 177px; flex: none; display: flex; flex-direction: column; border-left: 2px solid #777; border-top: 1px solid #aaa; padding: 5px 5px 7px 6px; background: #f0f0f0}
.panelbtns{display: flex; gap: 3px; padding: 3px 0}
.panelbtns button{width: 13px; height: 13px; border: 1px solid #c4c4c4; background: #e6e6e6; font-weight: bold; font-size: 8px}
.panelbtns svg{width: 11px; height: 11px}
.scroller{display: flex; flex: 1; min-height: 0}
.fields{flex: 1; min-width: 0; overflow: hidden}
.head{display: flex; justify-content: space-between; align-items: center; width: 100%; height: 10px; padding: 0 3px 0 2px; border: 1px solid #c9c9dc; background: #e0e2fc; font-weight: bold}
.head svg{width: 5px; height: 4px}
.rows{display: grid; grid-template-columns: 20px 1fr; align-items: center; padding: 6px 0 3px}
.rows > svg{width: 12px; height: 11px; margin-left: 4px}
.rows input{height: 13px; min-width: 0; border: 1px solid #c4c4c4; background: #fff; padding-left: 1px}
.rows .ro{background: #b5d0ea; border-color: #a5bdd4 #a5bdd4 #eee}
.scrollbar{display: flex; flex-direction: column; align-items: center; gap: 4px}
.panel .scrollbar{width: 8px; margin: 1px 0 0 5px}
.scrollbar svg{width: 5px; height: 4px}
.thumb{width: 100%; background: #cdcdcd}
.panel .thumb{flex: 1; margin-bottom: 10px}

.grip{width: 12px; flex: none; display: flex; flex-direction: column; align-items: center; background: #bdbdbd; border: 1px solid #999}
.grip button{height: 12px}
.grip svg{width: 9px; height: 9px}
.grip span{margin-top: auto; writing-mode: vertical-rl; transform: rotate(180deg); font-weight: bold; margin-bottom: 5px}

.sidetabs{width: 10px; flex: none; display: flex; flex-direction: column}
.sidetabs a{writing-mode: vertical-rl; transform: rotate(180deg); padding: 3px 0; border: 1px solid #ccc; border-left: 0; white-space: nowrap; text-align: center; font: 6px/8px Roboto, "Open Sans", sans-serif}
.sidetabs .active{background: #fff; color: #8b5560}

/* command window */
.command{flex: none; background: #fff; border-top: 1px solid #777}
.cmdhead{display: flex; align-items: center; gap: 3px; height: 12px; background: #bfbfbf; border-bottom: 1px solid #999}
.cmdhead h2{flex: 1; font-weight: bold}
.cmdhead svg{width: 8px; height: 8px}
.history{display: flex; height: 26px; border-bottom: 1px solid #ccc}
.log{flex: 1; font: 7px/8px Roboto, "Open Sans", sans-serif; padding: 1px}
.log a{color: #2d84b5}
.log .enter{font-style: italic}
.history .scrollbar{width: 8px; justify-content: space-between; padding: 3px 0; background: #f0f0f0}
.history .thumb{height: 5px; margin-top: 4px}
.prompt{display: flex; gap: 2px; height: 11px; padding: 1px}
.prompt input{flex: 1; border-left: 1px solid #333; height: 8px}

/* status bar */
.status{display: flex; align-items: center; gap: 3px; flex: none; height: 13px; background: #f0f0f0; font-family: Roboto, "Open Sans", sans-serif}
.version{width: 39%; margin-right: -3px}
.toggles{display: flex; gap: 4px}
.toggles button{width: 13px; height: 12px; border: 1px solid #ccc; background: #e8e8e8}
.toggles .on{border-color: #4b94c4; background: #d3e9f8}
.toggles svg{width: 11px; height: 10px}
.scale{display: flex; align-items: center; justify-content: space-between; width: 47px; height: 10px; padding: 0 3px 0 1px; border: 1px solid #bbb; background: #e6e6e6}
.scale svg{width: 6px; height: 5px}
```
